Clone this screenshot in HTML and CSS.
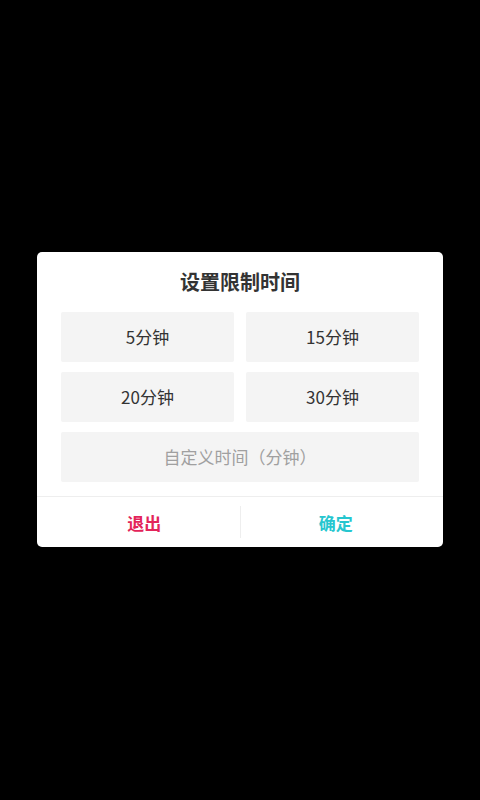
FILE: index.html
```html
<!DOCTYPE html>
<html lang="zh-CN">
<head>
    <meta charset="UTF-8">
    <meta name="viewport" content="width=device-width, initial-scale=1.0">
    <title>设置限制时间</title>
    <link rel="stylesheet" href="styles.css">
</head>
<body>
    <!-- Time limit dialog -->
    <div class="overlay">
        <div class="dialog">
            <h2 class="dialog-title">设置限制时间</h2>

            <div class="options">
                <button class="option">5分钟</button>
                <button class="option">15分钟</button>
                <button class="option">20分钟</button>
                <button class="option">30分钟</button>
                <input class="custom-time" type="text" placeholder="自定义时间（分钟）">
            </div>

            <div class="dialog-footer">
                <button class="footer-btn quit">退出</button>
                <span class="footer-divider"></span>
                <button class="footer-btn confirm">确定</button>
            </div>
        </div>
    </div>
</body>
</html>
```

FILE: styles.css
```css
body {
    margin: 0;
    padding: 0;
    background-color: #000000;
    font-family: "Noto Sans CJK SC", "Noto Sans", sans-serif;
}

.overlay {
    height: 800px;
    display: flex;
    flex-direction: column;
    align-items: center;
    padding-top: 252px;
    box-sizing: border-box;
}

/* White card in the middle */
.dialog {
    width: 406px;
    background-color: #ffffff;
    border-radius: 5px;
    overflow: hidden;
}

.dialog-title {
    margin: 0;
    height: 60px;
    line-height: 60px;
    text-align: center;
    font-size: 20px;
    font-weight: bold;
    color: #333333;
}

/* Preset minutes grid */
.options {
    display: grid;
    grid-template-columns: 1fr 1fr;
    gap: 10px 12px;
    padding: 0 24px 14px;
}

.option,
.custom-time {
    box-sizing: border-box;
    height: 50px;
    border: none;
    border-radius: 2px;
    background-color: #f4f4f4;
    font-family: "Noto Sans CJK SC", "Noto Sans", sans-serif;
    font-size: 17px;
    color: #333333;
    padding: 0 0 2px;
}

.custom-time {
    grid-column: 1 / 3;
    text-align: center;
    outline: none;
}

.custom-time::placeholder {
    color: #a0a0a0;
}

/* Bottom buttons */
.dialog-footer {
    display: flex;
    align-items: center;
    border-top: 1px solid #eeeeee;
    padding: 0 12px;
    height: 50px;
}

.footer-btn {
    flex: 1;
    height: 100%;
    border: none;
    background: none;
    font-family: "Noto Sans CJK SC", "Noto Sans", sans-serif;
    font-size: 17px;
    font-weight: bold;
    cursor: pointer;
}

.quit {
    color: #e3245a;
}

.confirm {
    color: #26c6cf;
}

.footer-divider {
    width: 1px;
    height: 32px;
    background-color: #eeeeee;
}
```
